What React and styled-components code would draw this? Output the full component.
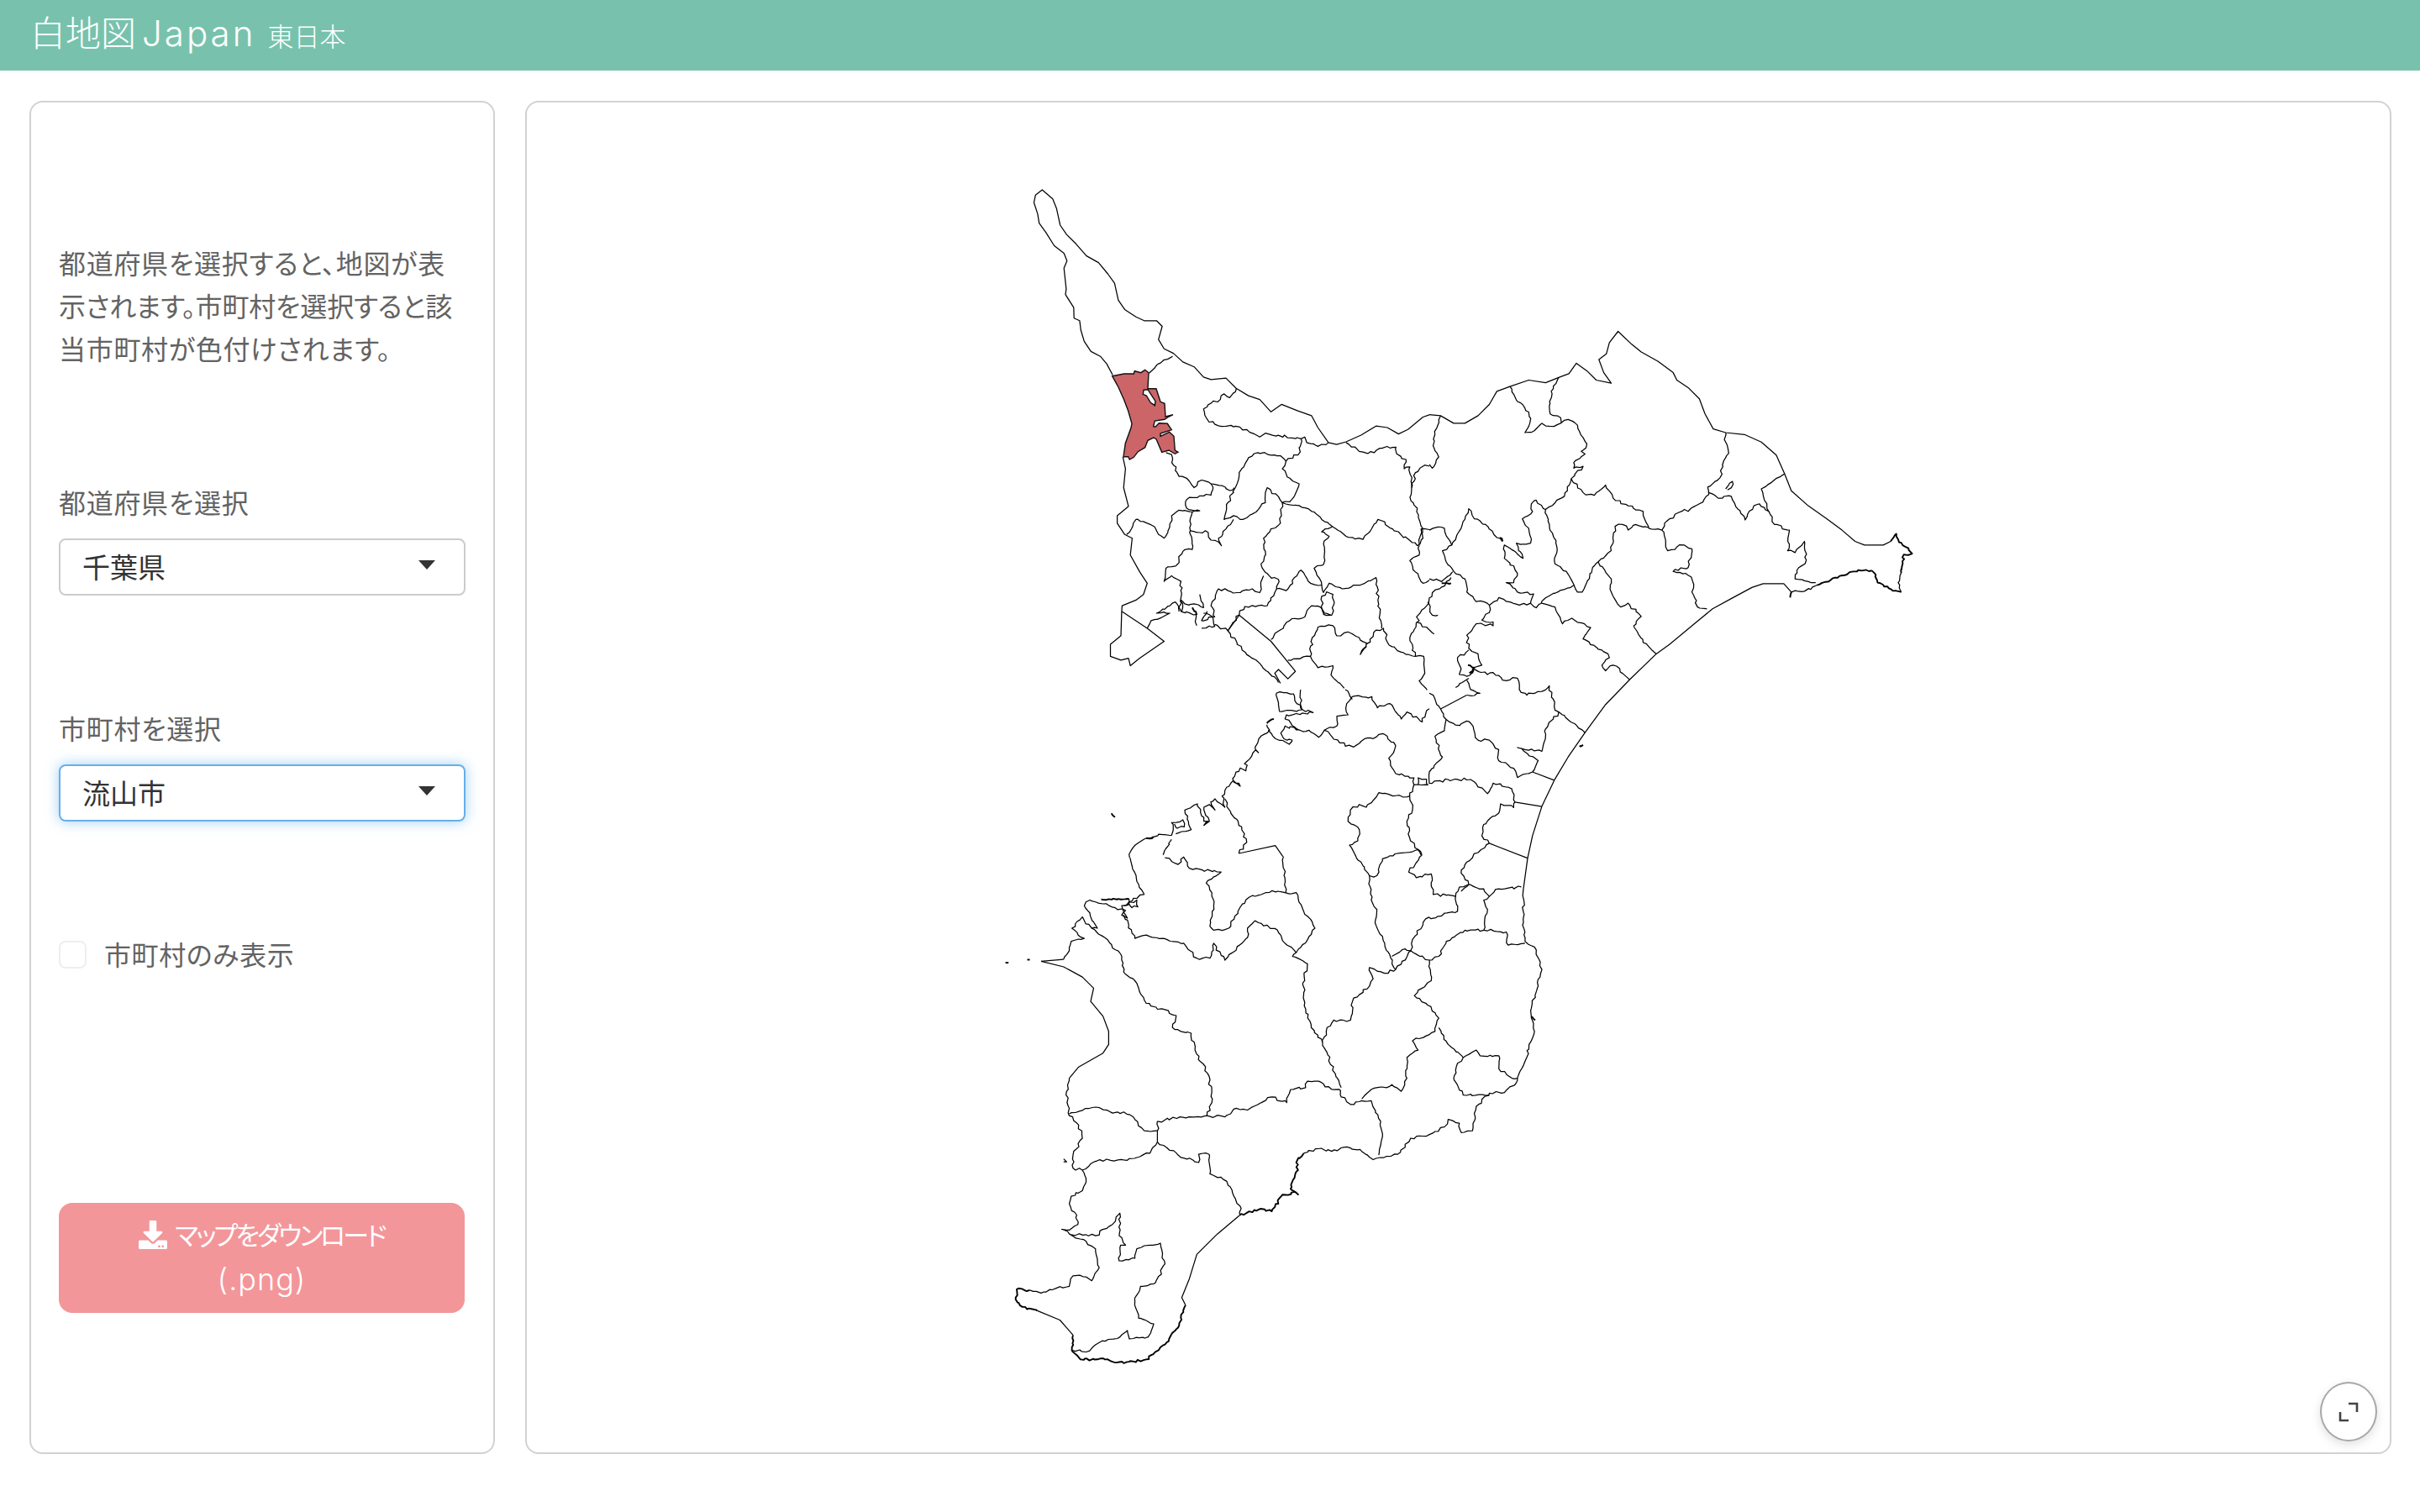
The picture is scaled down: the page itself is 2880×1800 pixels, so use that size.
import React from "react";
import styled, { createGlobalStyle } from "styled-components";
import { FaDownload } from "react-icons/fa";

const GlobalStyle = createGlobalStyle`
  html, body {
    margin: 0;
    padding: 0;
    background: #fff;
    font-family: "Noto Sans CJK JP", "Liberation Sans", sans-serif;
    color: #636363;
  }
  * { box-sizing: border-box; }
`;

const Page = styled.div`
  width: 2880px;
  height: 1800px;
  overflow: hidden;
`;

const TitleBar = styled.header`
  height: 84px;
  background: #78c2ad;
  color: #fff;
  display: flex;
  align-items: baseline;
  padding: 14px 0 0 36px;
  font-family: Inter, "Noto Sans CJK JP", sans-serif;
  font-weight: 300;
`;

const Title = styled.h1`
  margin: 0;
  font-size: 42px;
  line-height: 52px;
  font-weight: 300;
`;

const TitleLatin = styled.span`
  margin-left: 7px;
  letter-spacing: 3px;
`;

const SubTitle = styled.small`
  margin-left: 14px;
  font-size: 31px;
  font-weight: 300;
`;

const Body = styled.main`
  display: grid;
  grid-template-columns: 554px 1fr;
  grid-template-rows: 1611px;
  gap: 36px;
  padding: 36px 34px 0 35px;
`;

const Card = styled.section`
  border: 2px solid #d2d2d2;
  border-radius: 16px;
  background: #fff;
`;

const SideCard = styled(Card)`
  padding: 165px 33px 0;
`;

const MapCard = styled(Card)`
  position: relative;
  display: flex;
  align-items: center;
  justify-content: center;
`;

const Intro = styled.p`
  margin: 0;
  font-size: 32px;
  line-height: 51px;
  font-feature-settings: "palt";
  white-space: nowrap;
`;

const IntroLine = styled.span`
  display: block;
  letter-spacing: ${(p) => p.$spacing}px;
`;

const Label = styled.label`
  display: block;
  margin-top: 132px;
  font-size: 32px;
  line-height: 51px;
  font-feature-settings: "palt";
  letter-spacing: 0.7px;
`;

const Select = styled.div`
  margin-top: 18px;
  height: 68px;
  display: flex;
  align-items: center;
  justify-content: space-between;
  padding: 0 34px 3px 26px;
  border: 2px solid ${(p) => (p.$focus ? "#66afe9" : "#cccccc")};
  border-radius: 8px;
  box-shadow: ${(p) => (p.$focus ? "0 0 16px rgba(102, 175, 233, 0.6)" : "none")};
  font-size: 33px;
  color: #333;
`;

const Caret = styled.i`
  width: 0;
  height: 0;
  border-left: 10px solid transparent;
  border-right: 10px solid transparent;
  border-top: 11px solid #333;
  margin-top: -3px;
`;

const CheckRow = styled.div`
  margin-top: 133px;
  height: 51px;
  display: flex;
  align-items: center;
  gap: 21px;
  font-size: 32px;
  font-feature-settings: "palt";
  letter-spacing: 0.6px;
`;

const CheckBox = styled.span`
  width: 33px;
  height: 33px;
  border: 2px solid #eeeeee;
  border-radius: 8px;
  background: #fff;
`;

const CheckText = styled.span`
  margin-top: -3px;
`;

const DownloadButton = styled.button`
  display: block;
  width: 483px;
  height: 131px;
  margin-top: 270px;
  padding: 0;
  border: 0;
  border-radius: 16px;
  background: #f3969a;
  color: #fff;
  font-family: Inter, "Noto Sans CJK JP", sans-serif;
  font-size: 31px;
  line-height: 52px;
  text-align: center;
  font-feature-settings: "palt";

  svg {
    width: 34px;
    height: 34px;
    margin-right: 9px;
    vertical-align: -5px;
  }
`;

const ButtonLabel = styled.span`
  font-weight: 400;
  letter-spacing: -2.9px;
`;

const FileType = styled.span`
  font-size: 36px;
  font-weight: 300;
  letter-spacing: 1px;
`;

const MapSvg = styled.svg`
  display: block;
  width: 1170px;
  height: 1470px;
`;

const Line = styled.path`
  fill: none;
  stroke: #000;
  stroke-width: ${(p) => (p.$heavy ? 1.9 : 1.25)};
  stroke-linejoin: round;
`;

const Nagareyama = styled.path`
  fill: #cb6568;
  stroke: #111;
  stroke-width: 1.4;
  fill-rule: evenodd;
`;

const ExpandButton = styled.button`
  position: absolute;
  right: 15px;
  bottom: 13px;
  width: 68px;
  height: 71px;
  padding: 0;
  border: 2px solid #a8a8a8;
  border-radius: 50%;
  background: #fff;
  box-shadow: 0 4px 12px rgba(0, 0, 0, 0.12);
  display: flex;
  align-items: center;
  justify-content: center;
`;

// each block was traced from one crop: origin of the crop + its scale
const MAP = [
  {
    x: 1150, y: 200, k: 2.24,
    smooth: [
      "388,550 372,520 355,500 330,487 312,460 303,430 300,405 285,398 284,370 262,335 264,320 258,265 266,245 258,225 232,205 210,170 192,145 188,120 178,90 182,70 200,56 228,80 238,105 248,150 265,175 290,200 318,232 350,250 375,280 393,305 403,350 420,375 450,395 472,405 505,405 520,420 510,455 525,480 550,492 575,515 605,528 630,555 650,562 690,558 717,585 750,605 780,615 810,648 838,628 880,645 918,658 935,690 963,730 985,735 1010,728 1050,710 1090,686 1120,690 1150,707 1175,695 1215,662 1232,656",
      "415,768 422,800 417,850 430,900 400,925 400,945 420,975 440,985 435,1030 460,1075 480,1105 470,1135 450,1150 413,1165 412,1180",
      "412,1180 480,1225 525,1260 460,1305 435,1325 430,1305 410,1310 382,1300 382,1268 410,1245 412,1180",
      "695,1232 725,1190 810,1260 875,1340 855,1360 830,1335 820,1345 835,1372",
    ],
    rough: [
      "485,545 510,520 548,500",
      "718,585 700,610 685,600 675,615 650,625 630,640 640,668 670,685 710,688 745,695 780,715 795,705 890,720 900,715 905,730 935,740 963,730",
      "890,720 888,755 850,780 835,765 775,757 750,770 725,810 715,850 695,890 690,915 685,935 710,925 735,935 770,915 795,890 800,850 840,890",
      "850,780 840,800 860,825 885,840 880,855 860,888 840,890 885,898 925,915 945,935 975,955 1010,980 1055,988 1095,935 1200,1005 1215,985 1200,905 1183,885 1185,850 1180,795 1165,800 1170,775 1145,760 1143,742 1100,745 1085,757 1055,755 1010,730",
      "1185,850 1195,810 1220,790 1232,793",
      "425,975 450,935 480,945 500,955 510,975 525,985 540,955 545,925 565,910 600,915 620,912 585,905 585,882 620,872 650,870 655,855 650,840 625,830 605,850 585,825 565,820 550,790 545,762 530,757",
      "650,840 680,845 700,858 712,850",
      "600,915 595,965 600,1015 575,1020 560,1055 530,1065 525,1100 545,1085 570,1100 572,1180",
      "595,965 620,970 635,965 650,990 670,995 678,1005 670,985 690,960 710,935",
      "840,890 835,945 810,960 790,985 795,1020 785,1060 805,1085 830,1095 825,1120 850,1125 890,1070 915,1105 945,1110 950,1130",
      "973,955 945,968 965,980 950,1000 950,1055 925,1065 945,1110",
      "790,1085 780,1130 760,1120 720,1130 670,1120 650,1165 660,1195 630,1185",
      "825,1120 800,1165 740,1167 695,1232",
      "480,1225 490,1205 540,1185 505,1185 555,1155 570,1180 610,1188 612,1218",
      "620,1135 630,1170 605,1160 580,1160 570,1150 565,1180",
      "625,1225 660,1220 655,1195 625,1205 640,1180",
      "660,1215 695,1232 745,1295 770,1310 830,1370",
      "810,1255 860,1205 900,1195 918,1165 945,1170 950,1185 970,1190",
      "855,1310 915,1300 920,1250 935,1222 975,1218 985,1245 1015,1235 1045,1250 1065,1265 1048,1295 1090,1230 1110,1225 1125,1270 1170,1295 1195,1300 1217,1300 1220,1345 1205,1365 1226,1390",
      "915,1300 935,1330 975,1325 970,1350 1005,1385",
      "950,1130 965,1105 1000,1120 1030,1110 1060,1105 1090,1090 1095,1150 1105,1225",
      "945,1165 945,1140 958,1128 975,1135 978,1160 972,1190 950,1188 945,1165",
      "1205,1005 1205,1030 1180,1045 1195,1075 1215,1105 1232,1097",
      "1205,1005 1210,960 1232,962",
      "1195,1300 1180,1250 1205,1205 1198,1195 1225,1165 1240,1130 1265,1115 1290,1090",
      "1228,1155 1240,1190 1255,1190",
      "1200,1210 1245,1240",
    ],
    heavy: ["1265,1105 1290,1105", "600,1170 612,1190"],
  },
  {
    x: 1700, y: 360, k: 2.24,
    smooth: [
      "0,297 30,300 65,320 95,320 130,300 160,270 180,235 215,222 265,205 310,212 345,198 372,188 392,160 420,180 445,205 485,213 465,185 452,150 472,135 480,105 503,75 540,110 565,130 610,155 650,185 660,205 690,225 720,255 735,295 757,335 790,345 840,350 885,370 925,405 947,455 965,500 1010,540 1060,575 1100,605 1135,635 1160,645 1210,645 1230,635",
      "965,770 945,748 890,748 860,758 810,785 755,815 700,860 640,910 605,935 535,1003 470,1070 415,1145 370,1210 333,1272 300,1342 275,1420 262,1480 250,1568",
      "100,1045 30,1082",
      "228,1330 300,1342", "275,1250 333,1272", "160,1440 262,1480",
    ],
    rough: [
      "1258,720 1250,745 1258,770",
      "1033,752 1000,768 965,770",
      "215,222 235,262 265,290 268,320 255,345 280,340 300,320 320,328 350,320 370,310 395,325 410,358 420,375 405,395 415,402 385,425 385,440 410,435 378,468",
      "345,198 325,235 322,295 350,305 352,318",
      "30,300 15,350 10,380 25,410 8,440 0,430",
      "378,468 410,505 440,512 470,485 490,520 530,540 570,555 585,600 620,605",
      "378,468 360,515 340,525 310,550 285,525 272,535 275,555 255,570 248,575 265,600 270,640 232,640 250,680 225,660 200,645 200,680 225,700 235,720 225,745 205,745 235,770 278,775 270,800",
      "310,550 320,590 340,650 335,695 365,715 385,750 395,770 408,770 440,700 450,690 485,735 485,770 510,810 530,800 565,835 545,860 570,905 605,935",
      "450,690 485,660 495,595 515,590 530,605 550,590 585,598",
      "620,605 630,640 635,660 660,650 680,645 700,655 690,705 650,715 690,725 705,750 700,770 715,810 740,815",
      "620,605 640,575 680,550 690,555 720,535 745,510 742,490 775,465 785,420 798,400 790,370 790,345",
      "745,505 770,520 805,515 842,578 865,540 880,535 905,555 885,495 947,455",
      "905,555 920,590 960,605 955,660 975,665 1000,635 1005,685 985,705 975,735 1000,740 1030,745",
      "160,805 120,790 100,770 95,735 65,715 45,690 35,660 60,645 85,600 105,548 120,575 150,590 180,625 195,635",
      "60,645 40,600 10,600 0,605",
      "0,735 33,742 62,716",
      "160,805 185,785 205,795 240,805 270,800 285,812 300,795 320,780 385,752",
      "300,800 335,810 355,855 380,840 430,865 410,895 460,925 480,945 460,965 470,980 490,965 533,1003",
      "160,805 160,825 140,845 170,850 170,860 125,855 100,885 105,920 130,935 140,965 115,975 155,990 170,985 195,1005 235,1000 240,1030 260,1045 300,1035 320,1020 335,1085 345,1090 415,1145",
      "105,925 75,945 85,975 80,990 100,995 115,985",
      "105,1000 70,1025",
      "100,1005 110,1030 135,1040 100,1045",
      "0,1040 15,1055 20,1070 30,1082 45,1110 40,1140 15,1155 35,1210 20,1225 0,1250 0,1280 50,1270 110,1270 130,1290 155,1308 170,1280 220,1295 228,1330 225,1345 190,1335 185,1360 145,1390 140,1420 160,1440",
      "45,1110 70,1125 105,1115 130,1165 160,1165 185,1190 185,1220 225,1240 235,1265 275,1250 290,1220 260,1200 235,1185 255,1190 300,1195 310,1135 345,1090",
      "160,1440 130,1465 100,1490 85,1520 105,1550 85,1568",
      "790,495 808,475 805,492 795,498",
    ],
    heavy: [
      "1033,752 1080,732 1140,715 1180,713",
      "1230,635 1245,615 1250,630 1270,650 1287,668 1265,670 1258,720",
      "1180,713 1190,725 1195,745 1225,760 1258,770",
      "103,965 120,972 108,985 118,978",
      "188,625 195,635",
      "400,1180 410,1178",
      "965,770 962,785",
    ],
  },
  {
    x: 1180, y: 950, k: 2.24,
    smooth: [
      "130,433 190,448 240,475 270,505 262,540 295,580 310,620 310,655 295,678 230,715 205,745",
      "120,1365 180,1390 215,1430",
      "130,433 190,428",
      "440,885 440,915",
      "515,1350 505,1330 525,1280 545,1215 600,1160 660,1110",
    ],
    rough: [
      "190,428 205,405 210,380 245,372 212,345 240,315 265,345 280,345 245,285 260,270 355,298 345,310 360,318 345,285 405,255",
      "350,285 385,270 388,288 372,290 365,268",
      "300,370 345,420 350,462 380,485 395,520 410,545 490,578 480,610 530,625 540,670 578,740 585,810 572,845",
      "300,370 265,345",
      "205,840 275,822 320,838 350,835 380,855 405,885 440,885",
      "440,915 420,945 350,963 280,965 240,990",
      "440,860 500,848 572,845 620,848 650,825 680,830 745,795 785,810 795,775 835,770 840,753 875,755 905,775 928,778 930,795 955,815 985,805 1010,805 1035,860 1040,900 1030,950",
      "440,860 440,885",
      "440,915 465,930 495,950 550,970 550,948 578,948 580,1000 625,1020 640,1050 660,1085 660,1110",
      "985,800 1010,775 1050,770 1065,762 1090,780 1105,745 1105,690 1135,670 1120,645 1180,620 1190,585 1160,550 1125,525 1170,485 1165,430 1115,405 1075,455 1062,425 1020,330 1025,295 1010,270 1005,205 970,157",
      "880,650 890,620 910,590 955,590 960,540 1005,500 1015,480 1005,450 1045,465 1075,455",
      "880,650 930,770",
      "880,650 850,610 835,560 828,490 840,440 800,420 810,410 780,385 760,350 700,325 680,345 680,370 620,430 590,385 580,425 545,425 510,385 465,375 400,365 380,372 350,310",
      "810,410 860,345 830,300 810,250 780,250 745,245 685,262 660,290 630,345 590,350 580,340 590,285 585,250 570,225 610,195 525,185 510,155 495,175 460,157",
      "367,157 370,170 385,220 405,255",
      "775,157 782,250",
      "1065,420 1100,400 1115,405",
      "1145,150 1135,135 1085,145 1040,160 1025,205 1005,205",
      "1145,150 1110,195 1130,210 1170,200 1175,255 1235,260 1245,235",
      "1245,235 1265,230 1310,240 1325,260 1310,270 1320,295 1310,350 1260,350 1210,380 1190,420 1165,430",
      "1325,260 1350,240 1410,235",
      "1235,260 1240,300 1155,320 1120,375 1115,405",
      "1310,350 1370,355 1375,390 1420,385",
      "1190,610 1215,655 1255,690 1240,705 1230,745 1255,790 1325,790",
      "1255,690 1290,670 1300,685 1350,685 1350,720 1385,745 1400,745",
      "830,945 870,933 905,940 945,928 980,935 1015,962 1080,948 1115,905 1165,895 1205,875",
      "1205,875 1215,855 1245,865 1250,890 1280,885 1290,820 1325,785 1365,783 1395,760 1420,700 1445,620 1435,565 1465,455 1445,395 1420,380 1415,320 1415,246",
      "205,745 198,780 205,825 205,845 230,870 240,905 215,950",
      "215,950 215,985 240,990 250,1020 240,1045 210,1060 205,1080 225,1110 228,1135 205,1150 185,1148 205,1160 250,1180 275,1200 285,1250 265,1285 250,1275 215,1272 205,1300 170,1305 130,1318 100,1310",
      "212,1470 250,1475 285,1450 340,1435 360,1418 365,1440 415,1435 430,1400 390,1385 380,1340 395,1300 435,1290 460,1240 448,1185 420,1190 385,1200 380,1225 338,1232 342,1190 355,1190 338,1165 340,1105 330,1115 320,1135 275,1165 210,1162",
      "190,960 198,968 190,968",
    ],
    heavy: [
      "100,1310 65,1308 62,1335 80,1355 120,1365",
      "215,1430 212,1470 235,1495 300,1495 350,1505 410,1495 460,1455 495,1410 515,1350",
      "660,1110 710,1095 745,1100 770,1060 805,1048 815,1055 795,1040 800,1020 815,990 810,970 830,945",
      "290,268 365,268",
      "35,437 43,437", "93,429 100,429",
      "1438,580 1447,590",
    ],
  },
  {
    x: 1300, y: 820, k: 3,
    smooth: ["520,585 650,557 680,600"],
    rough: [
      "130,600 135,575 150,555 190,530 250,518 280,520 285,505 280,475 320,465 325,490 300,495 290,480",
      "280,535 250,590",
      "295,515 350,500 340,470 327,430 372,408 395,470 410,470 395,485 415,470 395,420 415,410 435,430 420,400 435,390 470,420 460,380 470,360 500,325 525,345 498,318 525,280 545,290 550,270 540,265 580,215 590,225 578,205 600,165 630,145 620,125",
      "625,145 650,175 700,195 710,180 680,175 670,155 685,130 750,150 685,105 690,90 785,82 745,70 720,40 715,15 655,12 665,78 745,72 740,0",
      "750,150 770,145 805,170 825,145 880,190 930,205 970,175 1000,175 1020,160 1040,160 1080,200 1055,245 1080,300 1145,315 1145,340 1130,380 1140,430 1120,470 1130,530 1170,590",
      "825,145 870,130 870,95 910,90 905,50 925,25 995,25 1015,65 1060,50 1100,105 1120,80 1175,115 1190,75 1200,68",
      "900,0 925,35",
      "1145,340 1195,340 1190,320 1160,315 1160,340",
      "1130,380 1070,380 1020,368 1000,395 975,420 950,410 918,430 910,470 950,500 945,540 915,555 940,600",
      "470,390 490,435 530,490 548,545 520,585",
    ],
    heavy: ["65,442 78,455", "620,120 645,105", "190,530 215,525"],
  },
];

// small seeded noise, turns the traced polylines into wobbly borders
let seed = 7;
const rnd = () => {
  seed = (seed * 16807) % 2147483647;
  return seed / 2147483647 - 0.5;
};

function buildPath(str, block, amp, step) {
  const pts = str.split(" ").map((s) => {
    const [a, b] = s.split(",").map(Number);
    return [block.x + a / block.k, block.y + b / block.k];
  });
  let d = `M${pts[0][0].toFixed(1)} ${pts[0][1].toFixed(1)}`;
  for (let i = 1; i < pts.length; i++) {
    const [x0, y0] = pts[i - 1];
    const [x1, y1] = pts[i];
    const len = Math.hypot(x1 - x0, y1 - y0);
    const n = amp ? Math.max(1, Math.round(len / step)) : 1;
    for (let j = 1; j <= n; j++) {
      const t = j / n;
      const o = j === n ? 0 : amp;
      const x = x0 + (x1 - x0) * t + rnd() * o * 2;
      const y = y0 + (y1 - y0) * t + rnd() * o * 2;
      d += `L${x.toFixed(1)} ${y.toFixed(1)}`;
    }
  }
  return d;
}

const LINES = MAP.flatMap((block) => [
  ...block.smooth.map((s) => ({ d: buildPath(s, block, 0, 1) })),
  ...block.rough.map((s) => ({ d: buildPath(s, block, 1.6, 4) })),
  ...block.heavy.map((s) => ({ d: buildPath(s, block, 1.4, 3), heavy: true })),
]);

const toPoly = (str) =>
  "M" +
  str
    .split(" ")
    .map((s) => {
      const [a, b] = s.split(",").map(Number);
      return `${(1300 + a / 3).toFixed(1)} ${(420 + b / 3).toFixed(1)}`;
    })
    .join("L") +
  "Z";

const CITY =
  toPoly(
    "68,80 110,72 145,72 148,62 170,68 185,58 198,68 195,125 225,125 240,172 255,178 258,225 270,222 285,218 270,225 255,235 220,240 215,260 222,262 235,248 265,250 280,272 240,285 240,295 272,280 288,295 292,345 303,352 292,358 270,345 245,352 225,305 215,300 195,310 185,335 160,350 145,370 130,378 125,368 108,368 115,320 135,265 138,250 125,205 110,165 90,120"
  ) + toPoly("180,130 195,128 222,170 220,185 205,175 190,150 178,145");

function ChibaMap() {
  return (
    <MapSvg viewBox="1150 190 1170 1470">
      {LINES.map((l, i) => (
        <Line key={i} d={l.d} $heavy={l.heavy} />
      ))}
      <Nagareyama d={CITY} />
    </MapSvg>
  );
}

function Sidebar() {
  return (
    <SideCard>
      <Intro>
        <IntroLine $spacing={0.7}>都道府県を選択すると、地図が表</IntroLine>
        <IntroLine $spacing={-0.2}>示されます。市町村を選択すると該</IntroLine>
        <IntroLine $spacing={0.7}>当市町村が色付けされます。</IntroLine>
      </Intro>
      <Label>都道府県を選択</Label>
      <Select>
        千葉県
        <Caret />
      </Select>
      <Label>市町村を選択</Label>
      <Select $focus>
        流山市
        <Caret />
      </Select>
      <CheckRow>
        <CheckBox />
        <CheckText>市町村のみ表示</CheckText>
      </CheckRow>
      <DownloadButton>
        <FaDownload />
        <ButtonLabel>マップをダウンロード</ButtonLabel>
        <br />
        <FileType>(.png)</FileType>
      </DownloadButton>
    </SideCard>
  );
}

export default function App() {
  return (
    <Page>
      <GlobalStyle />
      <TitleBar>
        <Title>
          白地図<TitleLatin>Japan</TitleLatin>
        </Title>
        <SubTitle>東日本</SubTitle>
      </TitleBar>
      <Body>
        <Sidebar />
        <MapCard>
          <ChibaMap />
          <ExpandButton>
            <svg width="24" height="24" viewBox="0 0 24 24" fill="none" stroke="#444" strokeWidth="2.6">
              <path d="M12 2h10v10" />
              <path d="M2 12v10h10" />
            </svg>
          </ExpandButton>
        </MapCard>
      </Body>
    </Page>
  );
}
